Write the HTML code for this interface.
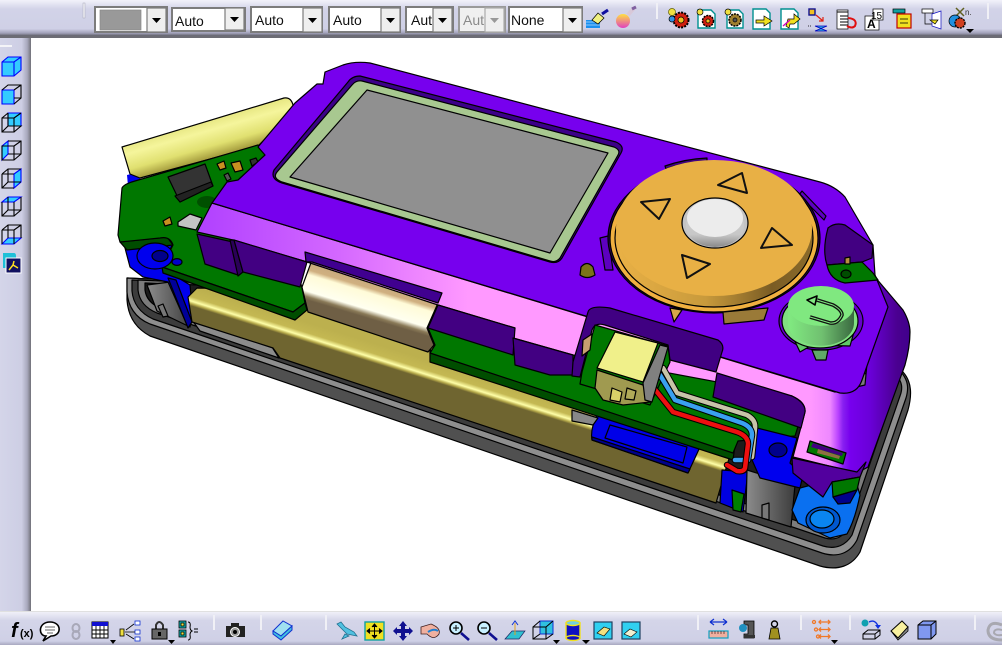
<!DOCTYPE html>
<html><head><meta charset="utf-8"><style>
html,body{margin:0;padding:0;background:#fff;width:1002px;height:645px;overflow:hidden}
svg{display:block}
text{font-family:"Liberation Sans",sans-serif}
</style></head><body>
<svg width="1002" height="645" viewBox="0 0 1002 645" xmlns="http://www.w3.org/2000/svg">
<defs>
<linearGradient id="tb" x1="0" y1="0" x2="0" y2="1"><stop offset="0" stop-color="#f2f2fa"/><stop offset=".25" stop-color="#d2d3e8"/><stop offset=".8" stop-color="#cfd0e6"/><stop offset=".92" stop-color="#a0a0b8"/><stop offset="1" stop-color="#606068"/></linearGradient>
<linearGradient id="bb" x1="0" y1="0" x2="0" y2="1"><stop offset="0" stop-color="#f0f0f8"/><stop offset=".25" stop-color="#d4d5e9"/><stop offset=".88" stop-color="#cfd0e6"/><stop offset="1" stop-color="#a8a8c0"/></linearGradient>
<linearGradient id="lb" x1="0" y1="0" x2="1" y2="0"><stop offset="0" stop-color="#d4d5e9"/><stop offset=".7" stop-color="#cdcee4"/><stop offset=".88" stop-color="#a8a8bc"/><stop offset="1" stop-color="#707078"/></linearGradient>
<linearGradient id="pink" gradientUnits="userSpaceOnUse" x1="197" y1="0" x2="910" y2="0">
<stop offset="0" stop-color="#b040ff"/><stop offset=".2" stop-color="#d468ff"/><stop offset=".38" stop-color="#ff99ff"/><stop offset=".86" stop-color="#ff99ff"/><stop offset=".888" stop-color="#ee88ff"/><stop offset=".899" stop-color="#bb44ff"/><stop offset=".906" stop-color="#8820f0"/><stop offset=".916" stop-color="#7700ee"/><stop offset=".944" stop-color="#6a00d8"/><stop offset=".982" stop-color="#4a0090"/><stop offset="1" stop-color="#40008c"/></linearGradient>
<linearGradient id="bat" gradientUnits="userSpaceOnUse" x1="197" y1="288" x2="186.4" y2="322">
<stop offset="0" stop-color="#bcb04e"/><stop offset=".28" stop-color="#c4b852"/><stop offset=".4" stop-color="#ffffa8"/><stop offset=".47" stop-color="#b8ac4c"/><stop offset=".53" stop-color="#6f6530"/><stop offset="1" stop-color="#6f6530"/></linearGradient>
<linearGradient id="rib" gradientUnits="userSpaceOnUse" x1="312" y1="260" x2="297" y2="310">
<stop offset="0" stop-color="#c4a67c"/><stop offset=".2" stop-color="#d0b080"/><stop offset=".29" stop-color="#fffbd8"/><stop offset=".6" stop-color="#fffff0"/><stop offset=".7" stop-color="#8a7a58"/><stop offset=".76" stop-color="#6f5f45"/><stop offset="1" stop-color="#6f5f45"/></linearGradient>
<linearGradient id="cyl" gradientUnits="userSpaceOnUse" x1="200" y1="115" x2="212" y2="157">
<stop offset="0" stop-color="#dcdc70"/><stop offset=".4" stop-color="#f5f59c"/><stop offset=".75" stop-color="#e0e070"/><stop offset="1" stop-color="#a8a040"/></linearGradient>
<linearGradient id="gold" gradientUnits="userSpaceOnUse" x1="620" y1="0" x2="810" y2="0"><stop offset="0" stop-color="#e8b045"/><stop offset=".45" stop-color="#c89a3c"/><stop offset=".8" stop-color="#7a5c24"/><stop offset="1" stop-color="#8a6a2a"/></linearGradient>
<linearGradient id="grn" gradientUnits="userSpaceOnUse" x1="790" y1="0" x2="854" y2="0"><stop offset="0" stop-color="#80e880"/><stop offset=".5" stop-color="#70c070"/><stop offset="1" stop-color="#3a6a40"/></linearGradient>
<linearGradient id="gy" x1="0" y1="0" x2="1" y2="0"><stop offset="0" stop-color="#8c8c8c"/><stop offset="1" stop-color="#3c3c3c"/></linearGradient>
<linearGradient id="wh" x1="0" y1="0" x2="0" y2="1"><stop offset="0" stop-color="#d0d0d0"/><stop offset=".7" stop-color="#c8c8c8"/><stop offset="1" stop-color="#8a8a8a"/></linearGradient>
<linearGradient id="sph" x1="0" y1="0" x2="0" y2="1"><stop offset="0" stop-color="#ffe040"/><stop offset="1" stop-color="#e040c0"/></linearGradient>
</defs>

<!-- ===== model ===== -->
<g stroke="#000" stroke-width="1.2" stroke-linejoin="round">
<!-- case -->
<path d="M127,278 L127,300 C128,315 135,328 150,336 L820,566 C838,571 852,566 860,552 L908,410 C912,395 912,382 903,372 L600,300 Z" fill="#505050"/>
<path d="M127,278 L127,292 C128,306 135,318 150,324 L822,553 C838,558 850,553 857,540 L906,398 C909,388 908,380 901,372 L600,300 Z" fill="#8e8e8e"/>
<path d="M132,280 L132,291 C133,303 140,313 153,319 L823,546 C836,550 846,545 852,535 L900,396 C903,388 902,382 897,376 L600,300 Z" fill="#3c3c3c"/>
<path d="M138,280 L138,290 C139,300 145,308 157,313 L825,538 C836,541 843,537 848,528 L893,396 C895,390 893,385 888,380 L600,300 Z" fill="#7c7c7c"/>
<path d="M145,283 L145,290 C146,298 151,304 160,308 L827,531 C835,533 841,530 845,522 L886,398 L600,300 Z" fill="#1c1c1c"/>
<path d="M147,285 L170,282 L192,318 L190,327 L157,311 Z" fill="url(#gy)"/>
<path d="M158,306 L163,304 L168,316 L163,317 Z" fill="#777"/>
<!-- lower strip pieces on rim -->
<path d="M192,320 L272,347 L279,358 L200,331 Z" fill="#8c8c8c"/>
<path d="M400,393 L438,405 L438,410 L400,398 Z" fill="#0000c0" stroke="none"/>
<path d="M440,397 L480,412 L480,416 L440,402 Z" fill="#999"/>
<!-- blue left -->
<path d="M125,248 L173,243 L162,268 L190,285 L193,318 L188,327 L168,282 L143,277 L130,267 Z" fill="#0000ee"/>
<path d="M127,175 L140,172 L140,182 L128,186 Z" fill="#0000ee" stroke="none"/>
<path d="M168,278 L176,280 L192,322 L188,328 Z" fill="#00009a"/>
<!-- battery -->
<path d="M197,288 L188,297 L192,322 L273,348 L280,358 L716,503 L727,465 L735,440 L300,290 Z" fill="url(#bat)"/>
<!-- blue connector -->
<path d="M597,415 L700,447 L688,473 L592,440 Q590,430 597,415 Z" fill="#0000e8"/>
<path d="M592,437 L690,469 L688,473 L592,440 Z" fill="#00008c"/>
<path d="M610,425 L687,447 L683,463 L605,438 Z" fill="none"/>
<path d="M572,410 L598,418 L593,425 L572,421 Z" fill="#888"/>
<!-- bottom right bits -->
<path d="M722,470 L748,472 L743,512 L720,503 Z" fill="#0000e0"/>
<path d="M732,490 L744,494 L741,512 L733,510 Z" fill="#008000"/>
<path d="M747,470 L795,485 L791,527 L746,513 Z" fill="url(#gy)"/>
<path d="M762,505 L769,503 L769,520 L762,518 Z" fill="#777"/>
<path d="M800,488 L792,510 L798,523 L830,538 L847,534 Q855,520 860,495 L855,478 L830,480 Z" fill="#0a70f0"/>
<ellipse cx="823" cy="520" rx="17" ry="13" fill="#0058d0"/>
<ellipse cx="822" cy="519" rx="12" ry="9" fill="#0a85f0"/>
<!-- green lower board -->
<path d="M430,350 L735,445 L733,460 L430,362 Z" fill="#004d00"/>
<path d="M428,328 L595,320 L722,345 L800,420 L795,436 L738,441 L733,453 L430,353 L435,345 Z" fill="#007700"/>
<!-- blue clip -->
<path d="M757,428 L797,438 L790,463 L803,475 L800,488 L760,478 L752,460 Z" fill="#0000ee"/>
<ellipse cx="778" cy="450" rx="9" ry="7" fill="#00008c"/>
<!-- yellow cylinder back -->
<path d="M122,147 L284,98 Q291,97 293,105 L292,112 L258,146 L140,178 L130,174 Z" fill="url(#cyl)"/>
<!-- left pcb -->
<path d="M120,242 L167,237 L173,245 L127,250 Z" fill="#004d00"/>
<path d="M122,188 Q124,184 135,181 L258,145 L270,160 L302,288 L305,303 L293,312 L162,267 L173,245 Q170,236 160,238 L120,242 L118,235 Z" fill="#007700"/>
<path d="M162,267 L163,273 L295,320 L307,310 L305,303 L293,312 Z" fill="#004d00"/>
<ellipse cx="177" cy="262" rx="5" ry="3.4" fill="#0000cc"/>
<ellipse cx="207" cy="202" rx="10" ry="6" fill="#005000" stroke="none"/>
<!-- blue ring -->
<ellipse cx="155" cy="256" rx="18" ry="13" fill="#0000ee"/>
<ellipse cx="160" cy="256" rx="8" ry="5.500" fill="#00008c"/>
<!-- chip etc -->
<path d="M168,177 L205,164 L213,186 L180,202 Z" fill="#333"/>
<path d="M175,196 L211,182 L213,186 L180,202 Z" fill="#222"/>
<path d="M178,222 L190,214 L202,218 L196,230 L178,226 Z" fill="#c4c4c4"/>
<path d="M163,221 L170,217 L172,224 L165,226 Z" fill="#c89020"/>
<path d="M217,164 L224,161 L226,168 L220,170 Z" fill="#c89020"/>
<path d="M231,163 L240,161 L243,170 L235,172 Z" fill="#c89020"/>
<path d="M224,175 L228,173 L231,179 L227,181 Z" fill="#555"/>
<path d="M250,160 L256,158 L258,162 L252,166 Z" fill="#333"/>
<!-- ribbon -->
<path d="M312,260 L302,287 L308,312 L428,352 L434,345 L427,328 L438,303 L438,295 Z" fill="url(#rib)"/>
<!-- pink side -->
<path d="M197,232 L212,203 L835,392 L865,385 L875,277 L903,310 Q910,322 910,332 Q910,347 905,365 L868,467 L857,473 L793,457 L805,412 Q806,402 792,396 L573,355 L513,338 L515,328 L438,305 L307,262 L233,240 Z" fill="url(#pink)"/>
<!-- dark purple blocks -->
<path d="M197,234 L205,264 L238,275 L233,242 Z" fill="#420082"/>
<path d="M230,240 L234,240 L243,272 L238,276 Z" fill="#2a0058"/>
<path d="M234,240 L307,262 L300,287 L243,272 Z" fill="#420082"/>
<path d="M305,252 L442,293 L438,303 L312,262 L306,262 Z" fill="#400090"/>
<path d="M438,305 L515,328 L513,355 L428,328 Z" fill="#420082"/>
<path d="M513,338 L573,355 L573,375 L550,375 L515,365 Z" fill="#420082"/>
<path d="M717,373 L792,396 Q806,403 805,412 L801,428 L713,397 Z" fill="#420082"/>
<path d="M792,458 L793,473 L823,497 L832,482 L860,477 L866,462 L857,472 Z" fill="#52009e"/>
<path d="M832,482 L860,477 L857,490 L833,497 Z" fill="#007700"/>
<path d="M833,497 L857,490 L850,503 L838,504 Z" fill="#00008c"/>
<!-- top face -->
<path d="M343,65 Q355,61 370,63 L820,182 Q835,186 845,197 L873,245 L875,275 L888,307 L862,380 Q857,395 840,393 L212,203 L227,182 L238,180 L265,155 L258,147 L295,103 L317,84 L323,84 L325,72 Z" fill="#7700ee"/>
<!-- wall of the cutout, lies over the top face -->
<path d="M573,362 L588,312 Q590,305 610,308 L718,340 Q725,345 722,352 L716,372 L670,360 L668,345 L605,325 Q595,322 592,330 L580,377 L572,376 Z" fill="#400082"/>
<path d="M595,325 L668,346 L670,362 L650,405 L580,384 L582,372 Z" fill="#007700"/>
<path d="M583,340 L592,334 L590,350 L582,356 Z" fill="#c8a070"/>
<!-- slot -->
<path d="M810,441 L846,453 L843,464 L807,452 Z" fill="#007700"/>
<path d="M813,443 L843,453 L842,456 L811,447 Z" fill="#420082" stroke="none"/>
<path d="M818,449 L840,456 L839,459 L817,453 Z" fill="#907040" stroke="none"/>
<!-- screen -->
<path d="M360,76 L616,142 Q625,146 621,153 L562,258 Q558,264 550,262 L282,183 Q270,179 274,170 L348,82 Q352,76 360,76 Z" fill="#3c0088"/>
<path d="M362,81 L614,147 Q621,150 618,155 L560,258 Q556,263 550,261 L282,182 Q272,178 277,172 L352,85 Q356,80 362,81 Z" fill="#a8c890"/>
<path d="M367,90 L608,153 L550,253 L290,177 Z" fill="#909090"/>
<!-- dpad -->
<path d="M665,166 Q685,159 707,158 L707,161 Q685,162 666,169 Z" fill="#420082"/>
<path d="M600,238 L608,236 L613,270 L605,270 Z" fill="#5d00c0"/>
<path d="M802,191 L826,216 L824,220 L799,195 Z" fill="#5d00c0"/>
<ellipse cx="714" cy="238" rx="106" ry="75" fill="#2a0058"/>
<path d="M670,308 L682,310 L674,322 Z" fill="#d8a848"/>
<path d="M723,312 L768,308 L764,320 L724,324 Z" fill="#9a7a38"/>
<ellipse cx="714" cy="238" rx="104" ry="74" fill="#f0b040"/>
<ellipse cx="714" cy="238" rx="99" ry="69" fill="url(#gold)"/>
<ellipse cx="714" cy="228" rx="98" ry="68" fill="#e8b045" stroke="none"/>
<ellipse cx="715" cy="223" rx="33" ry="25" fill="#c4c4c4"/>
<ellipse cx="715" cy="226" rx="29" ry="21" fill="url(#wh)" stroke="none"/>
<ellipse cx="715" cy="218" rx="28" ry="19" fill="#ececec" stroke="none"/>
<g fill="none" stroke="#111" stroke-width="2"><path d="M718,185 L742,173 L747,193 Z"/><path d="M641,202 L670,199 L659,219 Z"/><path d="M772,228 L792,245 L761,248 Z"/><path d="M682,255 L710,264 L687,278 Z"/></g>
<!-- post -->
<path d="M581,267 Q587,260 593,267 L595,275 Q587,280 580,275 Z" fill="#7a7418"/>
<!-- right clip -->
<path d="M828,228 Q835,222 845,225 L873,245 L872,258 L862,262 L827,265 Q822,250 828,228 Z" fill="#420082"/>
<path d="M827,265 L862,262 L873,273 L878,280 L845,283 Q830,280 827,265 Z" fill="#007700"/>
<ellipse cx="846" cy="274" rx="5" ry="4" fill="#004d00"/>
<path d="M845,258 L850,257 L850,264 L845,264 Z" fill="#b89040"/>
<!-- green button -->
<ellipse cx="821" cy="321" rx="42" ry="29" fill="#6600cc"/>
<path d="M791,333 L800,352 L812,345 L850,346 L856,325 Z" fill="#60c868"/>
<path d="M812,350 L828,350 L826,360 L816,360 Z" fill="#60a868"/>
<ellipse cx="820" cy="321" rx="38" ry="27" fill="#80e080"/>
<ellipse cx="820" cy="323" rx="32" ry="22" fill="url(#grn)" stroke="none"/>
<ellipse cx="821" cy="306" rx="33" ry="20" fill="#80e880" stroke="none"/>
<path d="M788,306 L788,323 A32,22 0 0 0 854,323 L854,306 A33,20 0 0 1 788,306 Z" fill="url(#grn)" stroke="none"/>
<path d="M817,300 L833,305 Q842,310 842,315 Q838,324 830,323 L810,317" fill="none" stroke="#111" stroke-width="3.600"/>
<path d="M817,300 L833,305 Q842,310 842,315 Q838,324 830,323 L810,317" fill="none" stroke="#80e880" stroke-width="1"/>
<path d="M807,300 L817,296 L815,305 Z" fill="#80e880" stroke-width="1.600"/>
<!-- connector -->
<path d="M597,370 L595,388 L603,400 L623,405 L650,402 L643,385 Z" fill="#a09a50"/>
<path d="M612,388 L622,392 L620,402 L610,400 Z" fill="#d8d068"/>
<path d="M627,388 L636,391 L634,400 L625,399 Z" fill="#b0aa58"/>
<g fill="none" stroke-linecap="round" stroke-linejoin="round">
<path d="M663,368 L677,393 L747,415 Q756,420 755,428 L752,457" stroke="#000" stroke-width="6.500"/>
<path d="M663,368 L677,393 L747,415 Q756,420 755,428 L752,457" stroke="#c8c4a8" stroke-width="4.500"/>
<path d="M660,375 L675,400 L742,423 Q752,427 752,435 L748,460 L735,460" stroke="#000" stroke-width="6.500"/>
<path d="M660,375 L675,400 L742,423 Q752,427 752,435 L748,460 L735,460" stroke="#3aa0f0" stroke-width="4.500"/>
<path d="M653,387 L673,412 L737,432 Q748,436 748,444 L745,468 Q744,472 737,471 L727,465" stroke="#000" stroke-width="6.500"/>
<path d="M653,387 L673,412 L737,432 Q748,436 748,444 L745,468 Q744,472 737,471 L727,465" stroke="#ee1010" stroke-width="4.500"/>
</g>
<path d="M615,332 L658,343 L643,382 L597,368 Z" fill="#f0f08a"/>
<path d="M660,345 L668,347 L652,402 L645,400 L643,383 Z" fill="#808080"/>
</g>

<!-- ===== UI chrome ===== -->
<rect x="31" y="0" width="971" height="36" fill="#cfd0e6"/>
<rect x="0" y="0" width="1002" height="36" fill="url(#tb)"/>
<rect x="0" y="36" width="1002" height="2" fill="#6c6c74"/>
<rect x="0" y="38" width="31" height="573" fill="url(#lb)"/>
<rect x="0" y="611" width="1002" height="1" fill="#e0e0e0"/>
<rect x="0" y="612" width="1002" height="33" fill="url(#bb)"/>
<rect x="0" y="45" width="12" height="2" fill="#f4f4f8"/>
<rect x="83" y="3" width="2" height="15" fill="#f0f0f6" stroke="#a8a8b8" stroke-width=".5"/>

<!-- combos -->
<g stroke="#7c7c7c" stroke-width="2">
<rect x="95" y="7" width="72" height="25" fill="#fff"/>
<rect x="172" y="8" width="73" height="23" fill="#fff"/>
<rect x="251" y="7" width="71" height="25" fill="#fff"/>
<rect x="329" y="7" width="71" height="25" fill="#fff"/>
<rect x="406" y="7" width="47" height="25" fill="#fff"/>
<rect x="459" y="7" width="46" height="25" fill="#f0f0f0" stroke="#9a9a9a"/>
<rect x="509" y="7" width="73" height="25" fill="#fff"/>
</g>
<rect x="100" y="10" width="41" height="20" fill="#999" stroke="#888" stroke-width=".7"/>
<g fill="#efefef" stroke="#7c7c7c" stroke-width="1.200">
<rect x="147" y="8" width="19" height="24"/><rect x="225" y="8" width="19" height="22"/><rect x="303" y="8" width="19" height="24"/><rect x="381" y="8" width="19" height="24"/><rect x="433" y="8" width="19" height="24"/><rect x="485" y="8" width="19" height="24" stroke="#aaa"/><rect x="563" y="8" width="19" height="24"/>
</g>
<g fill="#000"><path d="M152,18 L161,18 L156.500,23 Z"/><path d="M230,17 L239,17 L234.500,22 Z"/><path d="M308,18 L317,18 L312.500,23 Z"/><path d="M386,18 L395,18 L390.500,23 Z"/><path d="M438,18 L447,18 L442.500,23 Z"/><path d="M568,18 L577,18 L572.500,23 Z"/></g>
<path d="M490,18 L499,18 L494.500,23 Z" fill="#999"/>
<g font-size="14" fill="#101010">
<text x="175" y="26">Auto</text><text x="255" y="25">Auto</text><text x="333" y="25">Auto</text><text x="411" y="25">Aut</text><text x="463" y="25" fill="#8a8a8a">Aut</text><text x="511" y="25">None</text>
</g>

<!-- left toolbar cubes -->
<g fill="none" stroke-width="1.100">
<g transform="translate(1,57)" stroke="#0000ff"><path d="M1,5 L7,0 L20,0 L20,13 L13,19 L1,19 Z" fill="#33ccff"/><path d="M1,5 L13,5 L20,0 M13,5 L13,19"/></g>
<g transform="translate(1,85)" stroke="#000"><path d="M1,5 L13,5 L13,19 L1,19 Z" fill="#33ccff" stroke="#0000ff"/><path d="M1,5 L7,0 L20,0 L20,13 L13,19 M13,5 L20,0 M13,13 L20,13"/></g>
<g transform="translate(1,113)" stroke="#000"><path d="M7,0 L20,0 L20,13 L7,13 Z" fill="#33ccff" stroke="#0000ff"/><path d="M1,5 L7,0 M13,5 L20,0 M1,5 L13,5 L13,19 L1,19 Z M7,0 L7,13 L1,19 M7,13 L20,13 L13,19"/></g>
<g transform="translate(1,141)" stroke="#000"><path d="M1,5 L7,0 L7,13 L1,19 Z" fill="#33ccff" stroke="#0000ff"/><path d="M7,0 L20,0 L20,13 L13,19 L1,19 L1,5 L13,5 L13,19 M13,5 L20,0 M7,13 L20,13"/></g>
<g transform="translate(1,169)" stroke="#000"><path d="M13,5 L20,0 L20,13 L13,19 Z" fill="#33ccff" stroke="#0000ff"/><path d="M1,5 L7,0 L20,0 M1,5 L13,5 M1,5 L1,19 L13,19 M7,0 L7,13 L1,19 M7,13 L20,13"/></g>
<g transform="translate(1,197)" stroke="#000"><path d="M1,5 L7,0 L20,0 L13,5 Z" fill="#33ccff" stroke="#0000ff"/><path d="M1,5 L1,19 L13,19 L13,5 M20,0 L20,13 L13,19 M7,0 L7,13 L1,19 M7,13 L20,13"/></g>
<g transform="translate(1,225)" stroke="#000"><path d="M1,19 L7,13 L20,13 L13,19 Z" fill="#33ccff" stroke="#0000ff"/><path d="M1,5 L7,0 L20,0 L20,13 M1,5 L13,5 L13,19 M1,5 L1,19 M7,0 L7,13 M13,5 L20,0"/></g>
</g>
<path d="M3,253 L14,253 Q16,253 16,256 L16,268 L3,268 Z" fill="#1fc0d8"/>
<rect x="6" y="258" width="15" height="15" fill="#101060" stroke="#fff" stroke-width="1"/>
<path d="M9,270 L13,265 L18,268 M13,265 L14,261" stroke="#ffe020" stroke-width="1.500" fill="none"/>

<!-- top icons -->
<g>
<rect x="586" y="20" width="14" height="8" fill="#1a90f0"/><path d="M586,22 H600 M586,25 H600" stroke="#fff" stroke-width=".6"/>
<path d="M592,20 L598,13 L604,18 L598,24 Z" fill="#f0f080" stroke="#000" stroke-width=".7"/><path d="M602,14 L608,10" stroke="#1010a0" stroke-width="3"/>
<circle cx="623" cy="21" r="7" fill="url(#sph)"/><path d="M628,15 L634,8" stroke="#d8c8d8" stroke-width="4"/><path d="M632,9 L636,7" stroke="#8060a0" stroke-width="3"/>
<rect x="656" y="3" width="2" height="16" fill="#f0f0f6"/>
</g>
<g stroke="#000" stroke-width=".7">
<g><circle cx="681" cy="20" r="7.500" fill="#d02010" stroke-dasharray="2 1.200" stroke-width="2"/><circle cx="681" cy="20" r="3" fill="#f0c020"/><circle cx="672" cy="12" r="3.500" fill="#f0e040" stroke="#606000"/><circle cx="672" cy="19" r="3" fill="#3090e0"/></g>
<path d="M698,10 L711,10 L715,14 L715,28 L698,28 Z" fill="#fff" stroke="#009090" stroke-width="1.400"/><circle cx="708" cy="21" r="5.500" fill="#d02010" stroke-dasharray="2 1" stroke-width="1.500"/><circle cx="708" cy="21" r="2" fill="#f0c020"/><circle cx="700" cy="12" r="3" fill="#f0e040"/>
<path d="M727,10 L739,10 L743,14 L743,28 L727,28 Z" fill="#fff" stroke="#009090" stroke-width="1.400"/><circle cx="735" cy="20" r="6" fill="#a08030" stroke-dasharray="2 1" stroke-width="1.500"/><circle cx="735" cy="20" r="2" fill="#555"/><circle cx="728" cy="12" r="3" fill="#f0e040"/>
<path d="M753,9 L766,9 L770,13 L770,29 L753,29 Z" fill="#fff" stroke="#009090" stroke-width="1.400"/><path d="M756,20 L764,20 L764,16 L772,21 L764,26 L764,23 L756,23 Z" fill="#f0e020"/>
<path d="M781,9 L794,9 L798,13 L798,29 L781,29 Z" fill="#fff" stroke="#009090" stroke-width="1.400"/><path d="M786,26 L788,19 L794,19 L794,14 L800,19 L794,24 L790,24 L789,28 Z" fill="#f0e020"/><path d="M783,26 L790,20" stroke="#d000c0" stroke-width="1.400"/>
<rect x="809" y="9" width="6" height="6" fill="#f0c020" stroke="#101090" stroke-width="1.400"/><path d="M816,15 L823,21 M823,17 L823,21 L819,21" stroke="#e02010" fill="none" stroke-width="1.200"/><path d="M815,26 L827,31 L815,31 L827,26 Z" fill="#30b0e0" stroke="#0000c0"/><path d="M808,26 H812" stroke-dasharray="1 1"/>
<rect x="837" y="10" width="11" height="19" fill="#fff"/><path d="M837,12 H848 M840,16 H848 M840,19 H848 M840,22 H848 M840,25 H848" stroke-width="1"/><path d="M848,18 Q858,19 855,26 Q852,29 847,26" fill="none" stroke="#e01010" stroke-width="2"/>
<rect x="865" y="16" width="14" height="14" fill="#fff"/><rect x="873" y="9" width="10" height="11" fill="#fff"/>
<rect x="893" y="9" width="12" height="4" fill="#10a0a0"/><rect x="897" y="14" width="14" height="14" fill="#f0e020" stroke="#c00000" stroke-width="1.200"/><path d="M900,19 H908 M900,23 H908"/>
<rect x="922" y="9" width="11" height="4" fill="#fff"/><path d="M925,13 V24 L934,24" fill="none"/><path d="M932,14 L941,11 L941,29 L932,26 Z" fill="#fff" stroke="#1010c0"/><path d="M930,20 L938,20 L935,24 Z" fill="#f0e020"/>
<path d="M956,8 L964,16 M964,8 L956,16" stroke="#606020" stroke-width="1.500"/><circle cx="955" cy="21" r="6" fill="#2090e0"/><circle cx="960" cy="23" r="5" fill="#d04020" stroke-dasharray="2 1" stroke-width="1.400"/>
</g>
<text x="965" y="15" font-size="8" fill="#333">n.</text>
<text x="871" y="19" font-size="10" fill="#000" font-family="Liberation Serif, serif">15</text><text x="867" y="28" font-size="12" fill="#000" font-weight="bold" font-family="Liberation Serif, serif">A</text>
<path d="M966,29 L974,29 L970,33 Z" fill="#000"/>
<rect x="987" y="3" width="2" height="16" fill="#f0f0f6"/>

<!-- bottom icons -->
<g fill="#f0f0f6">
<rect x="213" y="615" width="2" height="15"/><rect x="260" y="615" width="2" height="15"/><rect x="325" y="615" width="2" height="15"/><rect x="697" y="615" width="2" height="15"/><rect x="800" y="615" width="2" height="15"/><rect x="849" y="615" width="2" height="15"/><rect x="974" y="615" width="2" height="15"/>
</g>
<text x="11" y="637" font-size="20" font-style="italic" font-weight="bold" font-family="Liberation Serif, serif" fill="#000">f</text>
<text x="20" y="637" font-size="11" font-weight="bold" fill="#000">(x)</text>
<path d="M50,622 C38,622 38,636 46,636 L43,641 L51,636 C62,636 62,622 50,622 Z" fill="#fff" stroke="#000" stroke-width="1.600"/><path d="M45,627 H55 M45,630 H55 M47,633 H53" stroke="#333" stroke-width=".8"/>
<g fill="none" stroke="#a8a8b8" stroke-width="2"><ellipse cx="76" cy="628" rx="3.500" ry="4"/><ellipse cx="76" cy="635" rx="3.500" ry="4"/></g>
<rect x="92" y="622" width="16" height="16" fill="#fff" stroke="#000"/><rect x="92" y="622" width="16" height="4" fill="#1010d0"/><path d="M92,630 H108 M92,634 H108 M96,626 V638 M100,626 V638 M104,626 V638" stroke="#000" stroke-width=".9"/>
<path d="M110,640 L116,640 L113,644 Z" fill="#000"/>
<g stroke="#000" stroke-width=".8"><rect x="120" y="629" width="4" height="7" fill="#f0e040"/><rect x="135" y="621" width="5" height="4" fill="#fff" stroke="#1030d0"/><rect x="135" y="630" width="5" height="4" fill="#fff" stroke="#1030d0"/><rect x="135" y="637" width="5" height="4" fill="#fff" stroke="#1030d0"/><path d="M125,632 H135 M126,630 L134,624 M126,634 L134,639" fill="none"/></g>
<path d="M156,630 V625 Q159,619 163,625 V630" fill="none" stroke="#333" stroke-width="2"/><rect x="152" y="629" width="15" height="10" fill="#666" stroke="#000"/><rect x="158" y="632" width="3" height="4" fill="#000"/>
<path d="M168,640 L175,640 L171.500,644 Z" fill="#000"/>
<g stroke="#000" stroke-width=".8"><rect x="179" y="621" width="7" height="7" fill="#10b0b0"/><rect x="179" y="630" width="7" height="7" fill="#10b0b0"/><rect x="181" y="623" width="3" height="3" fill="#f0e040"/><rect x="181" y="632" width="3" height="3" fill="#f0e040"/></g>
<path d="M188,622 Q191,622 190,627 Q190,630 192,631 Q190,632 190,635 Q191,640 188,640" fill="none" stroke="#000"/><path d="M194,629 H198 M194,632 H198" stroke="#000"/>
<rect x="226" y="626" width="19" height="11" fill="#222"/><rect x="231" y="623" width="8" height="4" fill="#222"/><circle cx="235" cy="632" r="4.500" fill="#999" stroke="#fff"/><circle cx="235" cy="632" r="2" fill="#000"/>
<path d="M273,631 L283,621 L292,626 L281,636 Z" fill="#a0e0f0" stroke="#1030d0"/><path d="M273,631 L273,634 L281,640 L292,630 L292,626 L281,636 Z" fill="#40c0e0" stroke="#1030d0"/>
<path d="M337,624 L347,634 L357,636 L354,632 L345,627 L341,622 Z M345,634 L342,639 L349,636 Z" fill="#50c0e0" stroke="#207090" stroke-width=".8"/>
<rect x="365" y="622" width="19" height="18" fill="#f0e020" stroke="#10a0a0" stroke-width="1.400"/><path d="M374.500,624 V638 M367,631 H382" stroke="#000"/><path d="M372,627 L374.500,624 L377,627 M372,635 L374.500,638 L377,635 M370,628.500 L367,631 L370,633.500 M379,628.500 L382,631 L379,633.500" fill="#000" stroke="#000"/>
<path d="M403,621 L407,626 L405,626 L405,629 L409,629 L409,627 L413,631 L409,635 L409,633 L405,633 L405,636 L407,636 L403,641 L399,636 L401,636 L401,633 L397,633 L397,635 L393,631 L397,627 L397,629 L401,629 L401,626 L399,626 Z" fill="#101090"/>
<path d="M421,627 L431,624 Q441,628 439,634 Q434,641 427,634 L421,634 Z" fill="#f0b0a0" stroke="#402020" stroke-width=".8"/><path d="M428,632 Q434,628 438,631" stroke="#2080d0" stroke-width="2" fill="none"/>
<g fill="none" stroke="#000"><circle cx="456" cy="628" r="6" fill="#c8f0ff" stroke-width="1.600"/><path d="M461,633 L469,640" stroke="#101090" stroke-width="2.600"/><path d="M453,628 H459 M456,625 V631"/></g>
<g fill="none" stroke="#000"><circle cx="484" cy="628" r="6" fill="#c8f0ff" stroke-width="1.600"/><path d="M489,633 L497,640" stroke="#101090" stroke-width="2.600"/><path d="M481,628 H487"/></g>
<path d="M505,639 L512,631 L525,631 L519,639 Z" fill="#30c0d0" stroke="#202060" stroke-width=".7"/><path d="M515,635 V623" stroke="#e0a020"/><path d="M512,625 L515,621 L518,625" fill="none" stroke="#1030d0"/>
<g fill="none" stroke="#000"><path d="M540,621 L553,621 L553,634 L540,634 Z" fill="#30c0e0" stroke="#1030d0"/><path d="M533,627 L540,621 M546,627 L553,621 M533,627 L546,627 L546,639 L533,639 Z M546,639 L553,634 M533,639 L540,634"/></g>
<path d="M553,640 L560,640 L556.500,644 Z" fill="#000"/>
<rect x="566" y="623" width="14" height="15" fill="#1010c0" stroke="#f0e020" stroke-width="1.400"/><ellipse cx="573" cy="623" rx="7" ry="2.500" fill="#70d0e0" stroke="#f0e020" stroke-width="1.400"/><ellipse cx="573" cy="638" rx="7" ry="2.500" fill="#1010c0" stroke="#f0e020" stroke-width="1.400"/>
<path d="M582,640 L590,640 L586,644 Z" fill="#000"/>
<rect x="594" y="622" width="18" height="17" fill="#30d0f0" stroke="#204060" stroke-width="1.200"/><path d="M597,633 L604,627 L610,629 L604,636 Z" fill="#f0e080" stroke="#000" stroke-width=".6"/>
<rect x="622" y="622" width="18" height="17" fill="#30d0f0" stroke="#204060" stroke-width="1.200"/><path d="M624,634 L630,629 L637,632 L631,637 Z" fill="#f0f0d0" stroke="#000" stroke-width=".6"/>
<path d="M710,622 H727 M710,622 L714,619 M710,622 L714,625 M727,622 L723,619 M727,622 L723,625" stroke="#1030d0" fill="none" stroke-width="1.200"/><rect x="709" y="631" width="19" height="7" fill="#f0b0a0" stroke="#10a0c0" stroke-width="1.200"/><path d="M712,631 V634 M715,631 V634 M718,631 V634 M721,631 V634 M724,631 V634" stroke="#402020" stroke-width=".7"/>
<path d="M744,621 H754 V638 H744 V634 H748 V625 H744 Z" fill="#555" stroke="#000" stroke-width=".8"/><circle cx="743" cy="628" r="4" fill="#2090c0"/><rect x="744" y="635" width="11" height="3" fill="#333"/>
<path d="M771,628 H778 L780,639 H769 Z" fill="#a09020" stroke="#000" stroke-width=".8"/><circle cx="774.500" cy="624" r="3" fill="none" stroke="#000" stroke-width="1.400"/>
<g fill="none" stroke="#f07828" stroke-width="1.300"><path d="M819,622 H830 M819,629.500 H830 M819,636.500 H830"/><circle cx="814" cy="622" r="1.500"/><circle cx="816" cy="629.500" r="1.500"/><circle cx="818" cy="636.500" r="1.500"/><path d="M821,620 L819,622 L821,624 M828,620 L830,622 L828,624 M821,627.500 L819,629.500 L821,631.500 M828,627.500 L830,629.500 L828,631.500 M821,634.500 L819,636.500 L821,638.500 M828,634.500 L830,636.500 L828,638.500"/></g>
<path d="M831,640 L838,640 L834.500,644 Z" fill="#000"/>
<circle cx="865" cy="623" r="3.500" fill="#10a0b0"/><path d="M869,622 Q875,619 878,626" fill="none" stroke="#1030e0" stroke-width="1.400"/><path d="M875,625 L881,625 L878,629 Z" fill="#1030e0"/><path d="M863,634 L868,630 L880,630 L880,635 L875,639 L863,639 Z M863,634 L875,634 L880,630 M875,634 L875,639" fill="none" stroke="#000"/>
<path d="M891,631 L902,621 L908,627 L898,638 Z" fill="#f8f0a0" stroke="#000"/><path d="M891,631 L898,638 L908,627 L908,631 L898,640 Z" fill="#888" stroke="#000" stroke-width=".8"/>
<path d="M918,625 L923,621 L936,621 L936,634 L931,639 L918,639 Z" fill="#8098f0" stroke="#000"/><path d="M918,625 L931,625 L936,621 M931,625 L931,639" fill="none" stroke="#000"/>
<path d="M1002,625 Q990,620 988,630 Q988,640 1002,640" fill="none" stroke="#a8a8b0" stroke-width="3"/><path d="M1002,630 Q994,628 994,633 Q996,636 1002,635" fill="none" stroke="#a8a8b0" stroke-width="2"/>
</svg>
</body></html>
